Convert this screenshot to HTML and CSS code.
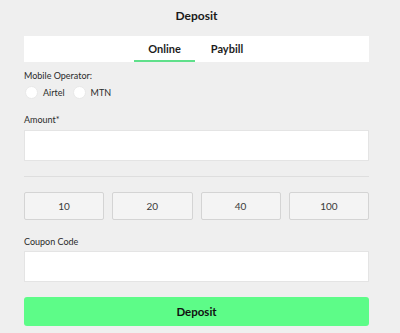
FILE: index.html
```html
<!DOCTYPE html>
<html>
<head>
<meta charset="utf-8">
<link rel="stylesheet" href="styles.css">
</head>
<body>
<div class="page">
  <h1 class="title">Deposit</h1>
  <div class="tabs">
    <div class="tab tab-active">Online</div>
    <div class="tab tab-paybill">Paybill</div>
  </div>
  <div class="label label-op">Mobile Operator:</div>
  <div class="radios">
    <label class="radio"><span class="circle"></span><span>Airtel</span></label>
    <label class="radio"><span class="circle"></span><span>MTN</span></label>
  </div>
  <div class="label label-amount">Amount*</div>
  <div class="input"></div>
  <div class="divider"></div>
  <div class="amounts">
    <div class="amt">10</div>
    <div class="amt">20</div>
    <div class="amt">40</div>
    <div class="amt">100</div>
  </div>
  <div class="label label-coupon">Coupon Code</div>
  <div class="input input-coupon"></div>
  <div class="submit">Deposit</div>
</div>
</body>
</html>
```
FILE: styles.css
```css
html, body {
  margin: 0;
  padding: 0;
  background: #efefef;
}
body {
  font-family: "Lato", "Noto Sans", sans-serif;
  color: #222;
}
.page {
  width: 345px;
  margin-left: 24px;
  display: flex;
  flex-direction: column;
}
.title {
  margin: 0 0 4px 0;
  height: 32px;
  line-height: 32px;
  text-align: center;
  font-size: 12px;
  font-weight: 700;
  color: #1a1a1a;
}
.tabs {
  height: 26px;
  background: #fff;
  display: flex;
  padding-left: 110px;
  box-sizing: border-box;
}
.tab {
  height: 26px;
  line-height: 26px;
  font-size: 11px;
  font-weight: 700;
  color: #1c1c1c;
  text-align: center;
  box-sizing: border-box;
}
.tab-active {
  width: 61px;
  border-bottom: 2px solid #5fe08b;
  line-height: 25px;
}
.tab-paybill {
  width: 58px;
  margin-left: 3px;
}
.label {
  font-size: 9px;
  line-height: 12px;
  color: #2a2a2a;
}
.label-op { margin-top: 8px; }
.radios {
  margin-top: 2px;
  height: 16px;
  display: flex;
  align-items: center;
  gap: 7px;
}
.radio {
  display: flex;
  align-items: center;
  gap: 5px;
  font-size: 9px;
  color: #2a2a2a;
}
.circle {
  width: 13px;
  height: 13px;
  border-radius: 50%;
  background: #fff;
  border: 1px solid #e9e9e9;
  box-sizing: border-box;
  margin-left: 1px;
}
.label-amount { margin-top: 14px; }
.input {
  margin-top: 4px;
  height: 31px;
  background: #fff;
  border: 1px solid #e4e4e4;
  box-sizing: border-box;
}
.divider {
  margin-top: 15px;
  height: 1px;
  background: #dedede;
}
.amounts {
  margin-top: 15px;
  display: grid;
  grid-template-columns: repeat(4, 1fr);
  gap: 8px;
}
.amt {
  height: 28px;
  line-height: 26px;
  text-align: center;
  font-size: 10px;
  color: #3a3a3a;
  background: #f4f4f4;
  border: 1px solid #d4d4d4;
  border-radius: 2px;
  box-sizing: border-box;
}
.label-coupon { margin-top: 16px; }
.input-coupon { margin-top: 3px; }
.submit {
  margin-top: 15px;
  height: 29px;
  line-height: 29px;
  background: #5dfc88;
  border-radius: 3px;
  text-align: center;
  font-size: 11.5px;
  font-weight: 700;
  color: #111;
}
```
